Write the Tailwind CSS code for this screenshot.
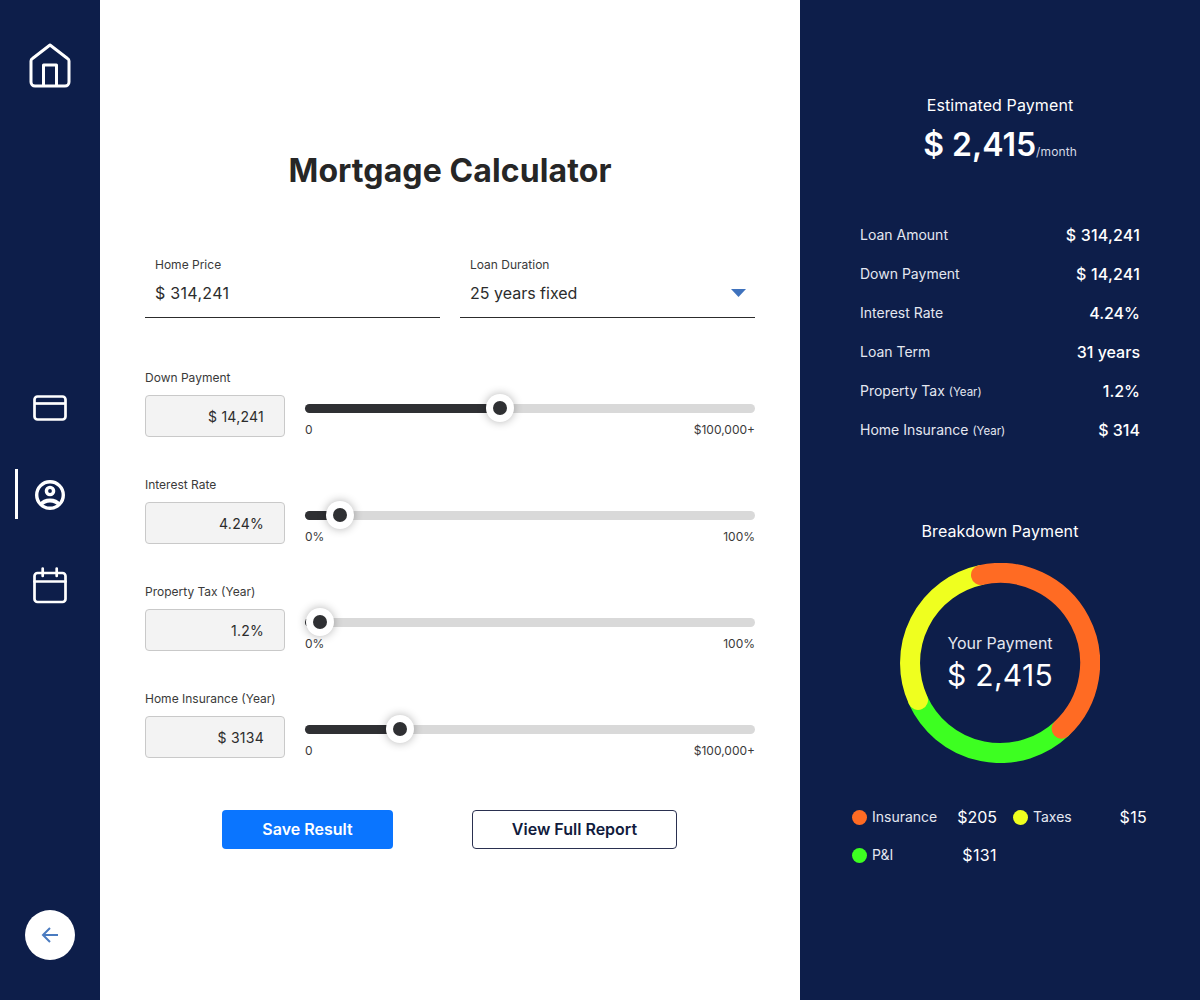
<!DOCTYPE html>
<html lang="en">
<head>
    <meta charset="UTF-8">
    <meta name="viewport" content="width=device-width, initial-scale=1.0">
    <title>Mortgage Calculator</title>
    <script src="https://cdn.jsdelivr.net/npm/@tailwindcss/browser@4"></script>
</head>
<body class="font-['Inter',sans-serif] antialiased bg-white">
  <div class="flex w-[1200px] h-[1000px] overflow-hidden">

    <!-- Sidebar -->
    <aside class="relative w-[100px] h-full shrink-0 bg-[#0d1e4a] flex flex-col items-center pt-[43px]">
      <svg class="w-[44px] h-[46px]" viewBox="0 0 44 46" fill="none" stroke="white" stroke-width="3" stroke-linejoin="round">
        <path d="M22 2 L39.5 15.5 a3 3 0 0 1 1.5 2.5 V39 a4 4 0 0 1-4 4 H7 a4 4 0 0 1-4-4 V18 a3 3 0 0 1 1.5-2.5 Z"/>
        <path d="M15.5 43 V22 h13 V43"/>
      </svg>
      <!-- card -->
      <svg class="w-[34px] h-[26px] mt-[306px]" viewBox="0 0 34 26" fill="none" stroke="white" stroke-width="2.7">
        <rect x="1.5" y="1.5" width="31" height="23" rx="3"/>
        <path d="M1.5 8.5 H32.5"/>
      </svg>
      <!-- profile -->
      <div class="absolute left-[15px] top-[469px] w-[3px] h-[50px] bg-white"></div>
      <svg class="w-[32px] h-[32px] mt-[58px]" viewBox="0 0 32 32" fill="none" stroke="white" stroke-width="3.4">
        <circle cx="16" cy="16" r="13.3"/>
        <circle cx="16" cy="12" r="3.6"/>
        <path d="M6.5 26 C11 20 21 20 25.5 26" stroke-width="4"/>
      </svg>
      <!-- calendar -->
      <svg class="w-[34px] h-[38px] mt-[56px]" viewBox="0 0 34 38" fill="none" stroke="white" stroke-width="2.7" stroke-linecap="round">
        <rect x="1.5" y="6" width="31" height="29" rx="3"/>
        <path d="M1.5 14.5 H32.5 M9.7 1.5 V9 M23.7 1.5 V9"/>
      </svg>
      <button class="mt-auto mb-[40px] w-[50px] h-[50px] rounded-full bg-white flex items-center justify-center">
        <svg class="w-[20px] h-[20px]" viewBox="0 0 20 20" fill="none" stroke="#4a7bc0" stroke-width="2">
          <path d="M18 10 H3 M10 3 L3 10 L10 17"/>
        </svg>
      </button>
    </aside>

    <!-- Calculator -->
    <main class="w-[700px] h-full shrink-0 bg-white px-[45px] pt-[152px]">
      <h1 class="text-[32px] leading-[38px] font-bold tracking-[0.1px] text-[#262626] text-center">Mortgage Calculator</h1>

      <div class="mt-[67px] grid grid-cols-2 gap-5">
        <div class="h-[61px] border-b border-[#2c2c2c] px-[10px]">
          <div class="text-xs leading-4 text-[#3a3a3a]">Home Price</div>
          <div class="mt-[10px] text-base leading-5 tracking-[0.3px] text-[#2c2c2c]">$ 314,241</div>
        </div>
        <div class="h-[61px] border-b border-[#2c2c2c] pl-[10px]">
          <div class="text-xs leading-4 text-[#3a3a3a]">Loan Duration</div>
          <div class="mt-[10px] text-base leading-5 text-[#2c2c2c] flex items-center justify-between">
            <span>25 years fixed</span>
            <svg class="w-[15px] h-[8px] mr-[9px]" viewBox="0 0 15 8"><path d="M0 0 H15 L7.5 8 Z" fill="#3f72bd"/></svg>
          </div>
        </div>
      </div>

      <div class="mt-[52px] flex flex-col gap-10">
        <!-- Down Payment -->
        <div class="h-[67px]">
          <div class="text-xs leading-4 text-[#3a3a3a] mb-[9px]">Down Payment</div>
          <div class="flex gap-5">
            <div class="w-[140px] h-[42px] rounded bg-[#f3f3f3] border border-[#c9c9c9] flex items-center justify-end pr-[20px] pt-px text-sm tracking-[0.25px] text-[#2c2c2c]">$ 14,241</div>
            <div class="flex-1 pt-[9px]">
              <div class="relative h-[9px] rounded-full bg-[#d9d9d9]">
                <div class="h-full w-[195px] rounded-full bg-[#2f3033]"></div>
                <div class="absolute left-[181px] top-[-10px] w-[28px] h-[28px] rounded-full bg-white shadow-[0_0_10px_rgba(0,0,0,0.3)] flex items-center justify-center"><div class="w-[14px] h-[14px] rounded-full bg-[#2f3033]"></div></div>
              </div>
              <div class="mt-[9px] flex justify-between text-xs leading-4 text-[#3a3a3a]"><span>0</span><span>$100,000+</span></div>
            </div>
          </div>
        </div>
        <!-- Interest Rate -->
        <div class="h-[67px]">
          <div class="text-xs leading-4 text-[#3a3a3a] mb-[9px]">Interest Rate</div>
          <div class="flex gap-5">
            <div class="w-[140px] h-[42px] rounded bg-[#f3f3f3] border border-[#c9c9c9] flex items-center justify-end pr-[20px] pt-px text-sm tracking-[0.25px] text-[#2c2c2c]">4.24%</div>
            <div class="flex-1 pt-[9px]">
              <div class="relative h-[9px] rounded-full bg-[#d9d9d9]">
                <div class="h-full w-[35px] rounded-full bg-[#2f3033]"></div>
                <div class="absolute left-[21px] top-[-10px] w-[28px] h-[28px] rounded-full bg-white shadow-[0_0_10px_rgba(0,0,0,0.3)] flex items-center justify-center"><div class="w-[14px] h-[14px] rounded-full bg-[#2f3033]"></div></div>
              </div>
              <div class="mt-[9px] flex justify-between text-xs leading-4 text-[#3a3a3a]"><span>0%</span><span>100%</span></div>
            </div>
          </div>
        </div>
        <!-- Property Tax -->
        <div class="h-[67px]">
          <div class="text-xs leading-4 text-[#3a3a3a] mb-[9px]">Property Tax (Year)</div>
          <div class="flex gap-5">
            <div class="w-[140px] h-[42px] rounded bg-[#f3f3f3] border border-[#c9c9c9] flex items-center justify-end pr-[20px] pt-px text-sm tracking-[0.25px] text-[#2c2c2c]">1.2%</div>
            <div class="flex-1 pt-[9px]">
              <div class="relative h-[9px] rounded-full bg-[#d9d9d9]">
                <div class="h-full w-[15px] rounded-full bg-[#2f3033]"></div>
                <div class="absolute left-[1px] top-[-10px] w-[28px] h-[28px] rounded-full bg-white shadow-[0_0_10px_rgba(0,0,0,0.3)] flex items-center justify-center"><div class="w-[14px] h-[14px] rounded-full bg-[#2f3033]"></div></div>
              </div>
              <div class="mt-[9px] flex justify-between text-xs leading-4 text-[#3a3a3a]"><span>0%</span><span>100%</span></div>
            </div>
          </div>
        </div>
        <!-- Home Insurance -->
        <div class="h-[67px]">
          <div class="text-xs leading-4 text-[#3a3a3a] mb-[9px]">Home Insurance (Year)</div>
          <div class="flex gap-5">
            <div class="w-[140px] h-[42px] rounded bg-[#f3f3f3] border border-[#c9c9c9] flex items-center justify-end pr-[20px] pt-px text-sm tracking-[0.25px] text-[#2c2c2c]">$ 3134</div>
            <div class="flex-1 pt-[9px]">
              <div class="relative h-[9px] rounded-full bg-[#d9d9d9]">
                <div class="h-full w-[95px] rounded-full bg-[#2f3033]"></div>
                <div class="absolute left-[81px] top-[-10px] w-[28px] h-[28px] rounded-full bg-white shadow-[0_0_10px_rgba(0,0,0,0.3)] flex items-center justify-center"><div class="w-[14px] h-[14px] rounded-full bg-[#2f3033]"></div></div>
              </div>
              <div class="mt-[9px] flex justify-between text-xs leading-4 text-[#3a3a3a]"><span>0</span><span>$100,000+</span></div>
            </div>
          </div>
        </div>
      </div>

      <div class="mt-[52px] ml-[77px] flex gap-[79px]">
        <button class="w-[171px] h-[39px] pb-px rounded bg-[#0a75ff] text-white text-base font-semibold">Save Result</button>
        <button class="w-[205px] h-[39px] pb-px rounded border border-[#2a3050] bg-white text-[#111b3d] text-base font-semibold">View Full Report</button>
      </div>
    </main>

    <!-- Summary -->
    <section class="w-[400px] h-full shrink-0 bg-[#0d1e4a] text-white pt-[95px]">
      <div class="text-center text-base leading-5 tracking-[0.1px]">Estimated Payment</div>
      <div class="mt-[10px] text-center leading-10"><span class="text-[32px] font-semibold">$ 2,415</span><span class="text-xs tracking-[0.1px] text-[#d5d9e6]">/month</span></div>

      <div class="mt-[55px] mx-[60px] flex flex-col gap-[19px]">
        <div class="flex items-center justify-between h-5"><span class="text-sm text-[#e4e7f0]">Loan Amount</span><span class="text-base font-medium tracking-[0.2px]">$ 314,241</span></div>
        <div class="flex items-center justify-between h-5"><span class="text-sm text-[#e4e7f0]">Down Payment</span><span class="text-base font-medium tracking-[0.2px]">$ 14,241</span></div>
        <div class="flex items-center justify-between h-5"><span class="text-sm text-[#e4e7f0]">Interest Rate</span><span class="text-base font-medium">4.24%</span></div>
        <div class="flex items-center justify-between h-5"><span class="text-sm text-[#e4e7f0]">Loan Term</span><span class="text-base font-medium">31 years</span></div>
        <div class="flex items-center justify-between h-5"><span class="text-sm text-[#e4e7f0]">Property Tax <span class="text-[11.5px]">(Year)</span></span><span class="text-base font-medium">1.2%</span></div>
        <div class="flex items-center justify-between h-5"><span class="text-sm text-[#e4e7f0]">Home Insurance <span class="text-[11.5px]">(Year)</span></span><span class="text-base font-medium">$ 314</span></div>
      </div>

      <div class="mt-[81px] text-center text-base leading-5 tracking-[0.1px]">Breakdown Payment</div>

      <div class="relative mt-[22px] mx-auto w-[200px] h-[200px]">
        <svg class="w-[200px] h-[200px]" viewBox="0 0 200 200" fill="none" stroke-width="20" stroke-linecap="round">
          <path d="M161.6 165.7 A90 90 0 0 1 18 137" stroke="#3dff21"/>
          <path d="M18 137 A90 90 0 0 1 81 12" stroke="#efff1f"/>
          <path d="M81 12 A90 90 0 0 1 161.6 165.7" stroke="#ff6b23"/>
        </svg>
        <div class="absolute inset-0 flex flex-col items-center justify-center">
          <div class="text-base leading-5 text-[#e4e7f0]">Your Payment</div>
          <div class="mt-[3px] text-[30px] leading-[38px] tracking-[0.3px] font-normal">$ 2,415</div>
        </div>
      </div>

      <div class="mt-[44px] ml-[52px] grid grid-cols-[145px_134px] gap-x-4 gap-y-[18px]">
        <div class="flex items-center h-5"><span class="w-[15px] h-[15px] rounded-full bg-[#ff6b23]"></span><span class="ml-[5px] text-sm text-[#e4e7f0]">Insurance</span><span class="ml-auto text-base">$205</span></div>
        <div class="flex items-center h-5"><span class="w-[15px] h-[15px] rounded-full bg-[#efff1f]"></span><span class="ml-[5px] text-sm text-[#e4e7f0]">Taxes</span><span class="ml-auto text-base tracking-[0.3px]">$15</span></div>
        <div class="flex items-center h-5"><span class="w-[15px] h-[15px] rounded-full bg-[#3dff21]"></span><span class="ml-[5px] text-sm text-[#e4e7f0]">P&amp;I</span><span class="ml-auto text-base tracking-[0.4px]">$131</span></div>
      </div>
    </section>
  </div>
</body>
</html>
